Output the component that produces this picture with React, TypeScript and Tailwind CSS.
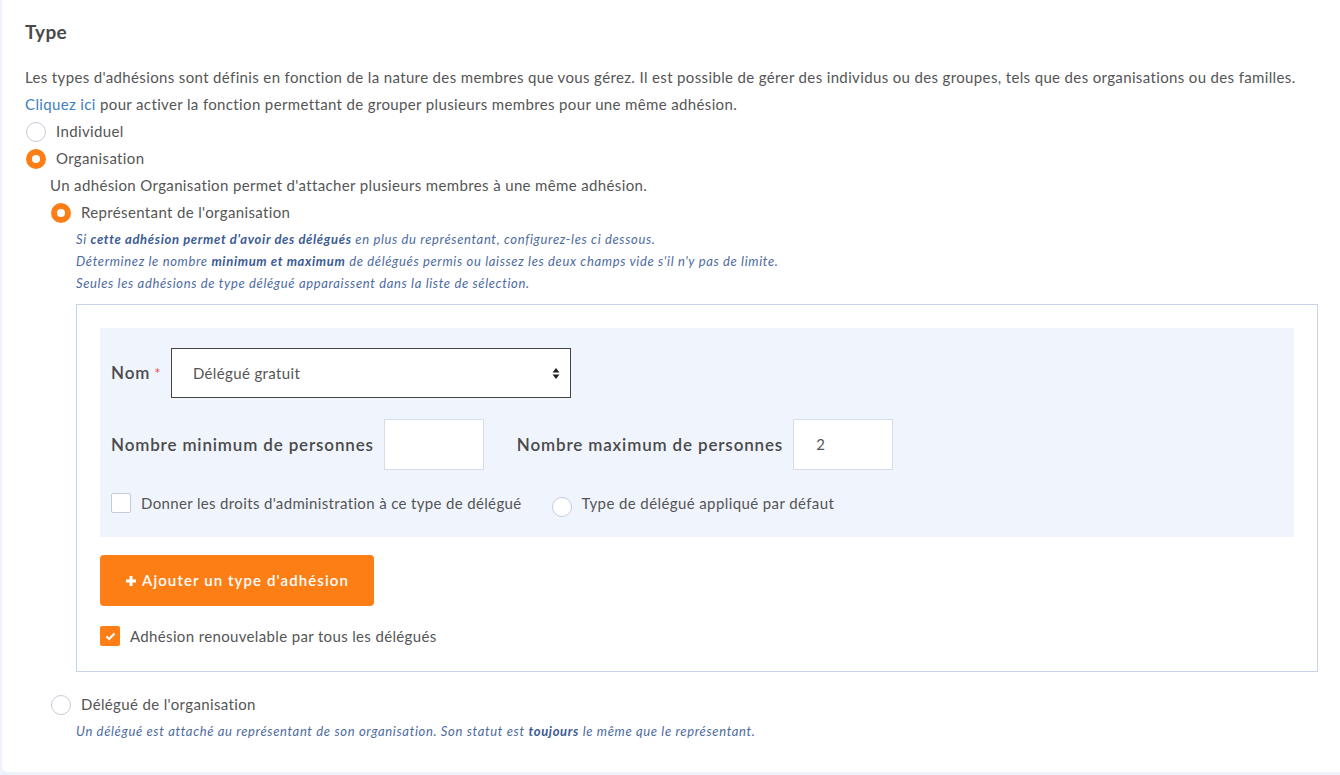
import React from "react";

const font = { fontFamily: "Lato, 'Noto Sans', sans-serif" };

function Radio({ checked }: { checked?: boolean }) {
  if (checked) {
    return (
      <span className="inline-flex h-[20px] w-[20px] shrink-0 items-center justify-center rounded-full bg-[#fd7e14]">
        <span className="h-[8px] w-[8px] rounded-full bg-white" />
      </span>
    );
  }
  return <span className="inline-block h-[20px] w-[20px] shrink-0 rounded-full border border-[#c5ccd8] bg-white" />;
}

export default function App() {
  return (
    <div className="min-h-[775px] bg-[#eef2fb] pl-[2px]" style={font}>
      <div className="h-[772px] rounded-bl-[6px] bg-white pl-[23px] pr-[22px] pt-[20px] text-[15px] tracking-[0.36px] text-[#555555]">
        <h2 className="text-[19px] font-bold leading-[24px] tracking-[0.3px] text-[#4a4a4a]">Type</h2>
        <p className="mt-[20px] leading-[27px]">
          Les types d'adhésions sont définis en fonction de la nature des membres que vous gérez. Il est possible de gérer des individus ou des groupes, tels que des organisations ou des familles.
        </p>
        <p className="leading-[27px]">
          <span className="text-[#3d7fc4]">Cliquez ici</span> pour activer la fonction permettant de grouper plusieurs membres pour une même adhésion.
        </p>
        <div className="flex h-[27px] items-center gap-[10px] pl-[1px]">
          <Radio />
          <span>Individuel</span>
        </div>
        <div className="flex h-[27px] items-center gap-[10px] pl-[1px]">
          <Radio checked />
          <span>Organisation</span>
        </div>
        <p className="pl-[25px] leading-[27px]">Un adhésion Organisation permet d'attacher plusieurs membres à une même adhésion.</p>
        <div className="flex h-[27px] items-center gap-[10px] pl-[26px]">
          <Radio checked />
          <span>Représentant de l'organisation</span>
        </div>
        <div className="pl-[51px] pt-[2px] text-[13px] italic leading-[22px] tracking-[0.65px] text-[#4d6b9e]">
          <p>
            Si <b className="font-bold text-[#3b5b93]">cette adhésion permet d'avoir des délégués</b> en plus du représentant, configurez-les ci dessous.
          </p>
          <p>
            Déterminez le nombre <b className="font-bold text-[#3b5b93]">minimum et maximum</b> de délégués permis ou laissez les deux champs vide s'il n'y pas de limite.
          </p>
          <p>Seules les adhésions de type délégué apparaissent dans la liste de sélection.</p>
        </div>
        <div className="ml-[51px] mt-[10px] h-[368px] border border-[#c8d3e5] px-[23px] pt-[23px]">
          <div className="h-[209px] bg-[#eff4fd] px-[11px] pt-[20px]">
            <div className="flex items-center">
              <span className="text-[17px] font-semibold tracking-[0.85px] text-[#4a4a4a]">Nom</span>
              <span className="ml-[4px] text-[15px] text-[#e55353]">*</span>
              <div className="ml-[10px] flex h-[50px] w-[400px] items-center justify-between border border-[#444] bg-white pl-[21px] pr-[10px]">
                <span>Délégué gratuit</span>
                <svg width="8" height="13" viewBox="0 0 8 13">
                  <path d="M4 1 L7.5 5.5 H0.5 Z" fill="#222" />
                  <path d="M4 12 L7.5 7.5 H0.5 Z" fill="#222" />
                </svg>
              </div>
            </div>
            <div className="mt-[21px] flex items-center">
              <span className="text-[17px] font-semibold tracking-[0.85px] text-[#4a4a4a]">Nombre minimum de personnes</span>
              <div className="ml-[10px] h-[51px] w-[100px] border border-[#d5dcea] bg-white" />
              <span className="ml-[33px] text-[17px] font-semibold tracking-[0.85px] text-[#4a4a4a]">Nombre maximum de personnes</span>
              <div className="ml-[10px] flex h-[51px] w-[100px] items-center border border-[#d5dcea] bg-white pl-[22px]">2</div>
            </div>
            <div className="mt-[22px] flex items-start">
              <span className="mt-[1px] inline-block h-[20px] w-[20px] rounded-[2px] border border-[#c5ccd8] bg-white" />
              <span className="ml-[10px] tracking-[0.35px]">Donner les droits d'administration à ce type de délégué</span>
              <span className="ml-[30px] mt-[5px]">
                <Radio />
              </span>
              <span className="ml-[10px] tracking-[0.4px]">Type de délégué appliqué par défaut</span>
            </div>
          </div>
          <button className="mt-[18px] flex h-[51px] w-[274px] items-center justify-center rounded-[4px] bg-[#fd7e14] text-[15px] font-semibold tracking-[1.1px] text-white">
            <svg width="12" height="12" viewBox="0 0 12 12" className="mr-[5px]">
              <path d="M6 1 V11 M1 6 H11" stroke="white" strokeWidth="3" />
            </svg>
            Ajouter un type d'adhésion
          </button>
          <div className="mt-[19px] flex items-center">
            <span className="inline-flex h-[20px] w-[20px] items-center justify-center rounded-[2px] bg-[#fd7e14]">
              <svg width="11" height="9" viewBox="0 0 11 9">
                <path d="M1.5 4.5 L4.2 7 L9.5 1.5" stroke="white" strokeWidth="2.2" fill="none" />
              </svg>
            </span>
            <span className="ml-[10px] tracking-[0.35px]">Adhésion renouvelable par tous les délégués</span>
          </div>
        </div>
        <div className="mt-[19px] flex h-[27px] items-center gap-[10px] pl-[26px]">
          <Radio />
          <span>Délégué de l'organisation</span>
        </div>
        <p className="pl-[51px] pt-[2px] text-[13px] italic leading-[22px] tracking-[0.65px] text-[#4d6b9e]">
          Un délégué est attaché au représentant de son organisation. Son statut est <b className="font-bold text-[#3b5b93]">toujours</b> le même que le représentant.
        </p>
      </div>
    </div>
  );
}
